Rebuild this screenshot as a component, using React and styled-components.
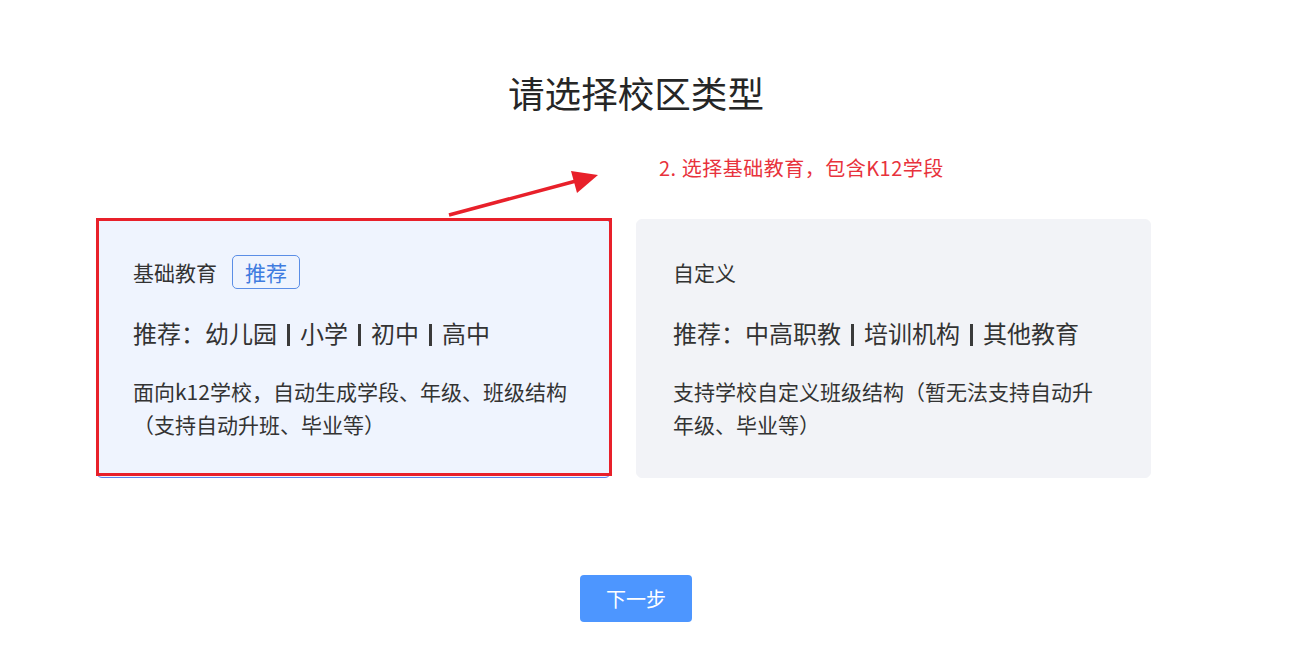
import React from 'react'
import styled, { createGlobalStyle } from 'styled-components'

const GlobalStyle = createGlobalStyle`
  html, body {
    margin: 0;
    padding: 0;
    background: #fff;
  }
  body {
    font-family: "Noto Sans CJK SC", "Noto Sans", sans-serif;
    color: #333;
  }
`

const Page = styled.div`
  position: relative;
  width: 1302px;
  height: 662px;
  box-sizing: border-box;
  padding: 68px 30px 0 0;
  display: flex;
  flex-direction: column;
  align-items: center;
  overflow: hidden;
`

const Title = styled.h1`
  margin: 0;
  font-size: 36.6px;
  line-height: 50px;
  font-weight: 400;
  color: #262626;
`

const CardRow = styled.div`
  margin-top: 101px;
  display: flex;
  gap: 25px;
  padding-right: 25px;
`

const Card = styled.div`
  width: 515px;
  height: 259px;
  box-sizing: border-box;
  padding: 35px 36px 0 36px;
  border-radius: 6px;
  background: ${p => (p.$active ? '#eff4fe' : '#f2f3f7')};
  border: 1px solid ${p => (p.$active ? '#5a82ee' : '#f2f3f7')};
  cursor: pointer;
`

const CardHead = styled.div`
  display: flex;
  align-items: center;
  gap: 15px;
  height: 34px;
`

const CardName = styled.span`
  font-size: 21px;
  color: #333;
`

const Tag = styled.span`
  display: inline-flex;
  align-items: center;
  justify-content: center;
  height: 34px;
  padding: 0 12px;
  box-sizing: border-box;
  border: 1px solid #5b8ee6;
  border-radius: 5px;
  font-size: 21px;
  color: #3f7ce0;
`

const Recommend = styled.div`
  margin-top: 26px;
  font-size: 24px;
  line-height: 36px;
  color: #333;
  white-space: nowrap;
`

const Sep = styled.span`
  display: inline-block;
  width: 3px;
  height: 22px;
  margin: 0 10px;
  background: #3a3a3a;
  vertical-align: -3px;
`

const Desc = styled.p`
  margin: 24px 0 0 0;
  font-size: 21px;
  line-height: 33px;
  color: #333;
  white-space: nowrap;
`

const NextButton = styled.button`
  margin-top: 97px;
  width: 112px;
  height: 47px;
  border: none;
  border-radius: 4px;
  background: #4d96ff;
  color: #fff;
  font-family: inherit;
  font-size: 20px;
  cursor: pointer;
`

const Overlay = styled.svg`
  position: absolute;
  left: 0;
  top: 0;
  pointer-events: none;
`

const Note = styled.span`
  position: absolute;
  left: 659px;
  top: 154px;
  font-size: 20px;
  line-height: 28px;
  letter-spacing: 0.5px;
  color: #e8323c;
  white-space: nowrap;
`

const cards = [
  {
    name: '基础教育',
    tag: '推荐',
    items: ['幼儿园', '小学', '初中', '高中'],
    lines: ['面向k12学校，自动生成学段、年级、班级结构', '（支持自动升班、毕业等）'],
    active: true,
  },
  {
    name: '自定义',
    items: ['中高职教', '培训机构', '其他教育'],
    lines: ['支持学校自定义班级结构（暂无法支持自动升', '年级、毕业等）'],
  },
]

export default function App() {
  return (
    <>
      <GlobalStyle />
      <Page>
        <Title>请选择校区类型</Title>
        <CardRow>
          {cards.map(c => (
            <Card key={c.name} $active={c.active}>
              <CardHead>
                <CardName>{c.name}</CardName>
                {c.tag && <Tag>{c.tag}</Tag>}
              </CardHead>
              <Recommend>
                推荐：
                {c.items.map((it, i) => (
                  <React.Fragment key={it}>
                    {i > 0 && <Sep />}
                    {it}
                  </React.Fragment>
                ))}
              </Recommend>
              <Desc>
                {c.lines[0]}
                <br />
                {c.lines[1]}
              </Desc>
            </Card>
          ))}
        </CardRow>
        <NextButton>下一步</NextButton>

        {/* screenshot annotation */}
        <Overlay width="1302" height="662">
          <rect x="97.5" y="219.5" width="513" height="255" fill="none" stroke="#e8202a" strokeWidth="3" />
          <line x1="449" y1="215" x2="576" y2="181" stroke="#e8202a" strokeWidth="3.5" />
          <polygon points="598,175 571,171 577,193" fill="#e8202a" />
        </Overlay>
        <Note>2. 选择基础教育，包含K12学段</Note>
      </Page>
    </>
  )
}
